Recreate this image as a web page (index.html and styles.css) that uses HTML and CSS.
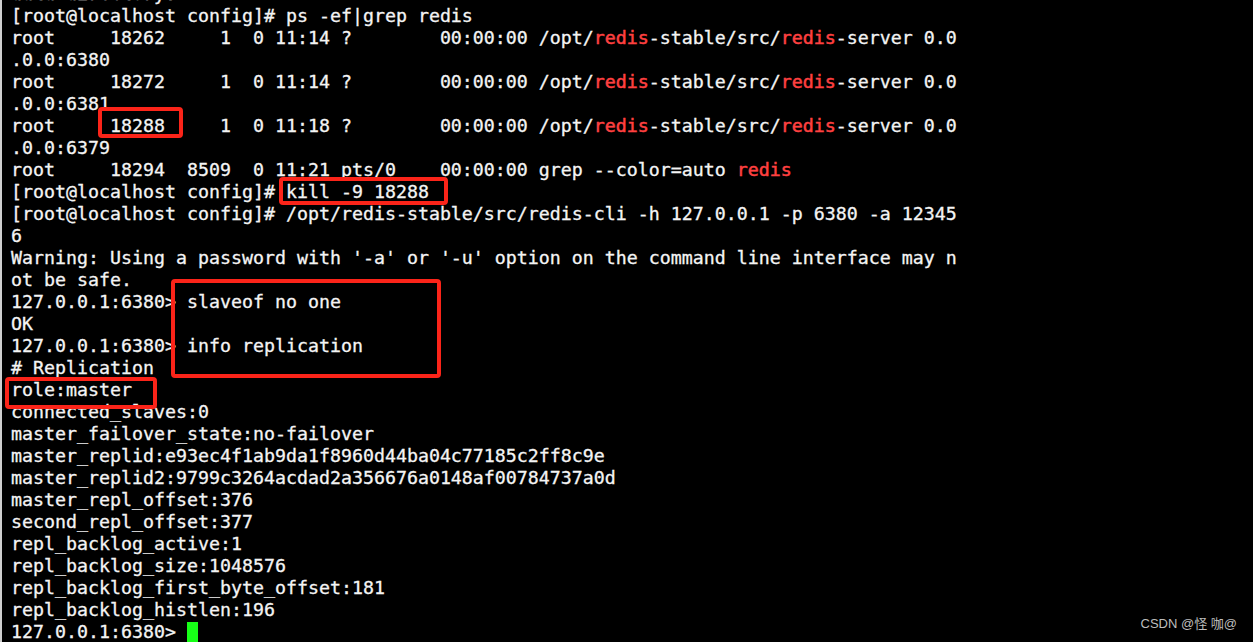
FILE: index.html
```html
<!DOCTYPE html>
<html lang="en">
<head>
<meta charset="utf-8">
<title>redis terminal</title>
<link rel="stylesheet" href="styles.css">
</head>
<body>
<div class="screen">
  <div class="term">
    <div class="row partial">data directory.</div>
    <div class="row">[root@localhost config]# ps -ef|grep redis</div>
    <div class="row">root     18262     1  0 11:14 ?        00:00:00 /opt/<span class="hl">redis</span>-stable/src/<span class="hl">redis</span>-server 0.0</div>
    <div class="row">.0.0:6380</div>
    <div class="row">root     18272     1  0 11:14 ?        00:00:00 /opt/<span class="hl">redis</span>-stable/src/<span class="hl">redis</span>-server 0.0</div>
    <div class="row">.0.0:6381</div>
    <div class="row">root     18288     1  0 11:18 ?        00:00:00 /opt/<span class="hl">redis</span>-stable/src/<span class="hl">redis</span>-server 0.0</div>
    <div class="row">.0.0:6379</div>
    <div class="row">root     18294  8509  0 11:21 pts/0    00:00:00 grep --color=auto <span class="hl">redis</span></div>
    <div class="row">[root@localhost config]# kill -9 18288</div>
    <div class="row">[root@localhost config]# /opt/redis-stable/src/redis-cli -h 127.0.0.1 -p 6380 -a 12345</div>
    <div class="row">6</div>
    <div class="row">Warning: Using a password with '-a' or '-u' option on the command line interface may n</div>
    <div class="row">ot be safe.</div>
    <div class="row">127.0.0.1:6380> slaveof no one</div>
    <div class="row">OK</div>
    <div class="row">127.0.0.1:6380> info replication</div>
    <div class="row"># Replication</div>
    <div class="row">role:master</div>
    <div class="row">connected_slaves:0</div>
    <div class="row">master_failover_state:no-failover</div>
    <div class="row">master_replid:e93ec4f1ab9da1f8960d44ba04c77185c2ff8c9e</div>
    <div class="row">master_replid2:9799c3264acdad2a356676a0148af00784737a0d</div>
    <div class="row">master_repl_offset:376</div>
    <div class="row">second_repl_offset:377</div>
    <div class="row">repl_backlog_active:1</div>
    <div class="row">repl_backlog_size:1048576</div>
    <div class="row">repl_backlog_first_byte_offset:181</div>
    <div class="row">repl_backlog_histlen:196</div>
    <div class="row">127.0.0.1:6380> <span class="cursor"></span></div>
  </div>

  <div class="mark mark-pid"></div>
  <div class="mark mark-kill"></div>
  <div class="mark mark-cmds"></div>
  <div class="mark mark-role"></div>

  <div class="watermark">CSDN @怪 咖@</div>
</div>
</body>
</html>
```

FILE: styles.css
```css
html, body {
  margin: 0;
  padding: 0;
  background: #000;
}

body {
  width: 1253px;
  height: 642px;
  overflow: hidden;
}

.screen {
  position: relative;
  width: 1253px;
  height: 642px;
  box-sizing: border-box;
  border-left: 2px solid #cfcfcf;
  background: #000;
  overflow: hidden;
}

.term {
  margin-top: -17px;
  padding-left: 9px;
  font-family: "DejaVu Sans Mono", "Liberation Mono", monospace;
  font-size: 18.27px;
  color: #f4f4f4;
  -webkit-text-stroke: 0.3px currentColor;
}

.row {
  height: 22px;
  line-height: 22px;
  white-space: pre;
}

.hl {
  color: #ff4040;
  -webkit-text-stroke: 0.5px currentColor;
}

.cursor {
  display: inline-block;
  width: 11px;
  height: 20px;
  vertical-align: -4px;
  background: #17ff17;
}

.mark {
  position: absolute;
  box-sizing: border-box;
  border: 4px solid #fb2419;
  border-radius: 4px;
}

.mark-pid {
  left: 96px;
  top: 107px;
  width: 85px;
  height: 31px;
}

.mark-kill {
  left: 277px;
  top: 177px;
  width: 169px;
  height: 28px;
}

.mark-cmds {
  left: 169px;
  top: 279px;
  width: 270px;
  height: 99px;
}

.mark-role {
  left: 3px;
  top: 377px;
  width: 152px;
  height: 32px;
}

.watermark {
  position: absolute;
  right: 16px;
  bottom: 9px;
  font-family: "Liberation Sans", "Noto Sans CJK SC", sans-serif;
  font-size: 13px;
  line-height: 18px;
  color: #bdbdbd;
}
```
